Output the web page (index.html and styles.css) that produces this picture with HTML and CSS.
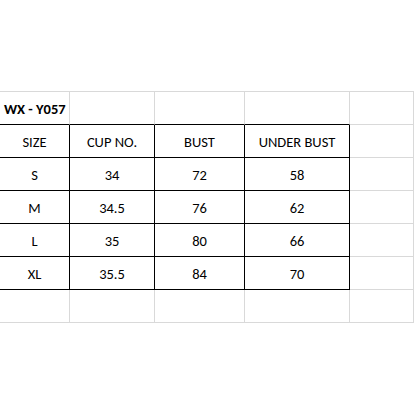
FILE: index.html
```html
<!DOCTYPE html>
<html>
<head>
<meta charset="utf-8">
<link rel="stylesheet" href="styles.css">
</head>
<body>
<table class="sheet">
  <colgroup>
    <col class="c1"><col class="c2"><col class="c3"><col class="c4"><col class="c5">
  </colgroup>
  <tr class="title-row">
    <td class="title edge-b">WX - Y057</td>
    <td class="edge-b"></td>
    <td class="edge-b"></td>
    <td class="edge-b"></td>
    <td></td>
  </tr>
  <tr class="data">
    <td>SIZE</td><td>CUP NO.</td><td>BUST</td><td class="edge-r">UNDER BUST</td><td class="out"></td>
  </tr>
  <tr class="data">
    <td>S</td><td>34</td><td>72</td><td class="edge-r">58</td><td class="out"></td>
  </tr>
  <tr class="data">
    <td>M</td><td>34.5</td><td>76</td><td class="edge-r">62</td><td class="out"></td>
  </tr>
  <tr class="data">
    <td>L</td><td>35</td><td>80</td><td class="edge-r">66</td><td class="out"></td>
  </tr>
  <tr class="data">
    <td>XL</td><td>35.5</td><td>84</td><td class="edge-r">70</td><td class="out"></td>
  </tr>
  <tr class="empty">
    <td></td><td></td><td></td><td></td><td></td>
  </tr>
</table>
</body>
</html>
```
FILE: styles.css
```css
html, body {
  margin: 0;
  padding: 0;
  background: #ffffff;
}
body {
  width: 414px;
  height: 414px;
  overflow: hidden;
  font-family: "Carlito", "Lato", "Open Sans", sans-serif;
  color: #000000;
}
.sheet {
  margin-top: 91px;
  border-collapse: separate;
  border-spacing: 0;
  table-layout: fixed;
  width: 414px;
  border-top: 1px solid #d9d9d9;
}
.c1 { width: 70px; }
.c2 { width: 85px; }
.c3 { width: 90px; }
.c4 { width: 105px; }
.c5 { width: 64px; }
.sheet td {
  height: 32px;
  padding: 1px 0 0 0;
  box-sizing: border-box;
  height: 33px;
  border-right: 1px solid #d9d9d9;
  border-bottom: 1px solid #d9d9d9;
  text-align: center;
  vertical-align: middle;
  font-size: 14.5px;
  line-height: 16px;
  white-space: nowrap;
  overflow: hidden;
}
.sheet .title {
  text-align: left;
  padding-left: 4px;
  font-weight: bold;
}
.sheet td.edge-b {
  border-bottom-color: #000000;
}
.sheet .data td {
  border-right-color: #000000;
  border-bottom-color: #000000;
}
.sheet .data td.out {
  border-right-color: #d9d9d9;
  border-bottom-color: #d9d9d9;
}
.sheet .data td.edge-r {
  border-right-color: #000000;
}
```
